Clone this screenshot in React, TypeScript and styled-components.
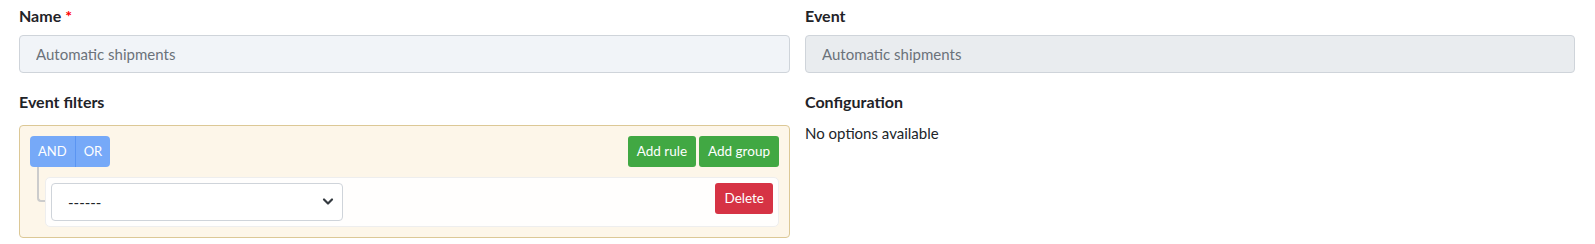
import React from "react";
import styled, { createGlobalStyle } from "styled-components";

const Global = createGlobalStyle`
  html, body { margin: 0; padding: 0; background: #fff; }
  body { font-family: "Lato", "Noto Sans", sans-serif; color: #212529; }
  * { box-sizing: border-box; }
`;

const Page = styled.div`
  display: grid;
  grid-template-columns: 771px 770px;
  column-gap: 15px;
  padding: 4px 20px 0 19px;
`;

const Field = styled.div`
  display: flex;
  flex-direction: column;
  margin-bottom: 17px;
`;

const Label = styled.div<{ $gap?: number }>`
  font-size: 16px;
  font-weight: 700;
  line-height: 24px;
  color: #1f2328;
  margin-bottom: ${(p) => p.$gap ?? 7}px;
`;

const Star = styled.span`
  color: #ff0000;
  margin-left: 4px;
`;

const TextInput = styled.input<{ $disabled?: boolean }>`
  height: 38px;
  width: 100%;
  padding: 0 16px;
  border: 1px solid #cfd4da;
  border-radius: 4px;
  background: ${(p) => (p.$disabled ? "#e9ecef" : "#f1f4f8")};
  color: #6b727a;
  font-family: inherit;
  font-size: 15px;
  outline: none;
`;

const Group = styled.div`
  border: 1px solid #dcc896;
  border-radius: 4px;
  background: #fdf6e9;
  padding: 10px;
`;

const GroupHeader = styled.div`
  display: flex;
  justify-content: space-between;
  align-items: flex-start;
`;

const BtnGroup = styled.div`
  display: flex;
  gap: 3px;
`;

const Seg = styled.div`
  display: flex;
  border-radius: 4px;
  overflow: hidden;
`;

const SegBtn = styled.button<{ $first?: boolean }>`
  height: 31px;
  padding: 0 8px;
  border: none;
  border-left: ${(p) => (p.$first ? "none" : "1px solid #5b95f2")};
  background: #76a9f8;
  color: #fff;
  font-family: inherit;
  font-size: 13px;
  line-height: 31px;
`;

const Btn = styled.button<{ $variant: "success" | "danger" }>`
  height: 31px;
  padding: 0 9px;
  border: none;
  border-radius: 3px;
  background: ${(p) => (p.$variant === "success" ? "#41a843" : "#d63344")};
  color: #fff;
  font-family: inherit;
  font-size: 13.5px;
  line-height: 31px;
`;

const RulesList = styled.div`
  position: relative;
  margin: 10px 0 0 15px;
`;

const Connector = styled.div`
  position: absolute;
  left: -8px;
  top: -10px;
  width: 8px;
  height: 35px;
  border-left: 2px solid #cccccc;
  border-bottom: 2px solid #cccccc;
  border-bottom-left-radius: 4px;
`;

const Rule = styled.div`
  display: flex;
  justify-content: space-between;
  align-items: flex-start;
  padding: 5px;
  border: 1px solid #eeeeee;
  border-radius: 5px;
  background: rgba(255, 255, 255, 0.9);
`;

const SelectWrap = styled.div`
  position: relative;
  width: 292px;
  height: 38px;
`;

const Select = styled.select`
  appearance: none;
  width: 100%;
  height: 100%;
  padding: 0 30px 0 16px;
  border: 1px solid #cfd4da;
  border-radius: 4px;
  background: #fff;
  color: #212529;
  font-family: inherit;
  font-size: 15px;
  outline: none;
`;

const Chevron = styled.svg`
  position: absolute;
  right: 9px;
  top: 14px;
  pointer-events: none;
`;

const Plain = styled.div`
  font-size: 15px;
  line-height: 24px;
  color: #212529;
`;

export default function App() {
  return (
    <>
      <Global />
      <Page>
        <Field>
          <Label>
            Name<Star>*</Star>
          </Label>
          <TextInput defaultValue="Automatic shipments" />
        </Field>
        <Field>
          <Label>Event</Label>
          <TextInput $disabled readOnly defaultValue="Automatic shipments" />
        </Field>
        <Field>
          <Label $gap={11}>Event filters</Label>
          <Group>
            <GroupHeader>
              <Seg>
                <SegBtn $first>AND</SegBtn>
                <SegBtn>OR</SegBtn>
              </Seg>
              <BtnGroup>
                <Btn $variant="success">Add rule</Btn>
                <Btn $variant="success">Add group</Btn>
              </BtnGroup>
            </GroupHeader>
            <RulesList>
              <Connector />
              <Rule>
                <SelectWrap>
                  <Select defaultValue="">
                    <option value="">------</option>
                  </Select>
                  <Chevron width="12" height="9" viewBox="0 0 12 9">
                    <path d="M2 2.5 L6 6.5 L10 2.5" fill="none" stroke="#343a40" strokeWidth="2.2" strokeLinecap="round" strokeLinejoin="round" />
                  </Chevron>
                </SelectWrap>
                <Btn $variant="danger">Delete</Btn>
              </Rule>
            </RulesList>
          </Group>
        </Field>
        <Field>
          <Label $gap={7}>Configuration</Label>
          <Plain>No options available</Plain>
        </Field>
      </Page>
    </>
  );
}
